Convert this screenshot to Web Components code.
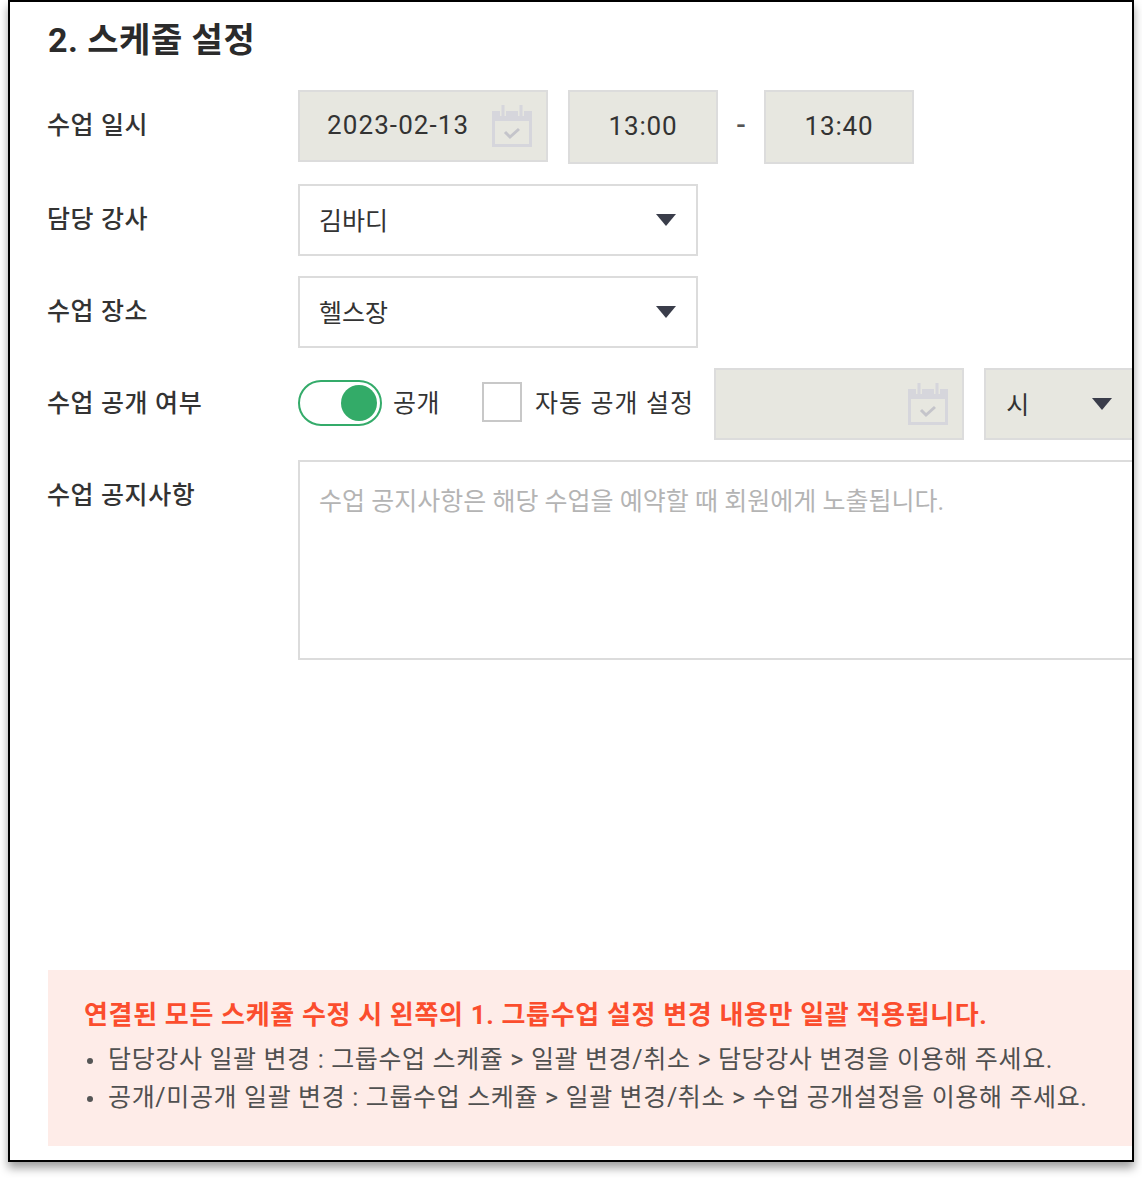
<!DOCTYPE html>
<html lang="ko">
<head>
<meta charset="utf-8">
<title>스케줄 설정</title>
<style>
  html, body { margin: 0; background: #fff; overflow: hidden; }
  body { height: 1178px; font-family: Roboto, "Noto Sans CJK KR", "Noto Sans", sans-serif; color: #333; }
</style>
</head>
<body>

<sk-panel>
  <sk-heading slot="heading">2. 스케줄 설정</sk-heading>

  <sk-row label="수업 일시">
    <sk-field width="250" height="72" disabled icon style="letter-spacing:1.1px">2023-02-13</sk-field>
    <sk-field width="150" height="74" disabled align="center">13:00</sk-field>
    <span style="width:46px;margin:0 -20px;text-align:center;font-size:28px;font-weight:500;line-height:70px;color:#555">-</span>
    <sk-field width="150" height="74" disabled align="center">13:40</sk-field>
  </sk-row>

  <sk-row label="담당 강사">
    <sk-select width="400">김바디</sk-select>
  </sk-row>

  <sk-row label="수업 장소">
    <sk-select width="400">헬스장</sk-select>
  </sk-row>

  <sk-row label="수업 공개 여부">
    <sk-toggle>공개</sk-toggle>
    <sk-check>자동 공개 설정</sk-check>
    <sk-field width="250" height="72" disabled icon></sk-field>
    <sk-select width="150" disabled>시</sk-select>
  </sk-row>

  <sk-row label="수업 공지사항">
    <sk-notearea placeholder="수업 공지사항은 해당 수업을 예약할 때 회원에게 노출됩니다."></sk-notearea>
  </sk-row>

  <sk-notice slot="footer" heading="연결된 모든 스케쥴 수정 시 왼쪽의 1. 그룹수업 설정 변경 내용만 일괄 적용됩니다.">
    <li>담당강사 일괄 변경 : 그룹수업 스케쥴 &gt; 일괄 변경/취소 &gt; 담당강사 변경을 이용해 주세요.</li>
    <li>공개/미공개 일괄 변경 : 그룹수업 스케쥴 &gt; 일괄 변경/취소 &gt; 수업 공개설정을 이용해 주세요.</li>
  </sk-notice>
</sk-panel>

<script>
/* shared calendar glyph, used by sk-field */
const CALENDAR_SVG = `
  <svg width="40" height="42" viewBox="0 0 40 42" aria-hidden="true">
    <path d="M0 6h40v36H0z" fill="#d6d6dc"/>
    <path d="M3 16h34v23H3z" fill="#e7e7e0"/>
    <path d="M8 1h6v10H8zM26 1h6v10h-6z" fill="#e7e7e0"/>
    <path d="M9.5 0h3v11h-3zM27.5 0h3v11h-3z" fill="#d6d6dc"/>
    <path d="M13 27l5 5 9-8" fill="none" stroke="#c4c4ca" stroke-width="3"/>
  </svg>`;

class SkPanel extends HTMLElement {
  constructor() {
    super();
    this.attachShadow({ mode: 'open' }).innerHTML = `
      <style>
        :host {
          display: block;
          box-sizing: border-box;
          width: 1126px;
          height: 1162px;
          margin-left: 8px;
          border: 2px solid #000;
          background: #fff;
          box-shadow: 0 6px 9px rgba(0, 0, 0, .38);
          overflow: hidden;
        }
        .inner {
          box-sizing: border-box;
          height: 100%;
          padding: 15px 0 14px 38px;
          display: flex;
          flex-direction: column;
        }
        .rows {
          display: flex;
          flex-direction: column;
          gap: 20px;
          margin-top: 27px;
        }
        .foot { margin-top: auto; }
      </style>
      <div class="inner">
        <slot name="heading"></slot>
        <div class="rows"><slot></slot></div>
        <div class="foot"><slot name="footer"></slot></div>
      </div>`;
  }
}

class SkHeading extends HTMLElement {
  constructor() {
    super();
    this.attachShadow({ mode: 'open' }).innerHTML = `
      <style>
        :host {
          display: block;
          font-size: 34px;
          font-weight: 700;
          line-height: 46px;
          letter-spacing: .5px;
          color: #2b2b2b;
        }
      </style>
      <slot></slot>`;
  }
}

class SkRow extends HTMLElement {
  constructor() {
    super();
    const root = this.attachShadow({ mode: 'open' });
    root.innerHTML = `
      <style>
        :host { display: flex; align-items: flex-start; }
        .label {
          flex: none;
          width: 251px;
          margin-left: -1px;
          font-size: 25px;
          font-weight: 500;
          color: #333;
          line-height: 72px;
          letter-spacing: .6px;
        }
        .ctl { flex: none; display: flex; align-items: flex-start; gap: 20px; }
      </style>
      <div class="label"></div>
      <div class="ctl"><slot></slot></div>`;
    root.querySelector('.label').textContent = this.getAttribute('label');
  }
}

class SkField extends HTMLElement {
  constructor() {
    super();
    const root = this.attachShadow({ mode: 'open' });
    const hasIcon = this.hasAttribute('icon');
    root.innerHTML = `
      <style>
        :host {
          display: flex;
          box-sizing: border-box;
          width: ${this.getAttribute('width') || 250}px;
          height: ${this.getAttribute('height') || 72}px;
          border: 2px solid #dcdcdc;
          align-items: center;
          padding: 0 14px 0 27px;
          font-size: 26px;
          letter-spacing: .9px;
          color: #333;
          flex: none;
        }
        :host([disabled]) { background: #e7e7e0; }
        :host([align="center"]) { justify-content: center; padding: 0; }
        .txt { flex: 1; position: relative; top: -1px; }
        :host([align="center"]) .txt { flex: none; }
        svg { display: block; flex: none; }
      </style>
      <span class="txt"><slot></slot></span>
      ${hasIcon ? CALENDAR_SVG : ''}`;
  }
}

class SkSelect extends HTMLElement {
  constructor() {
    super();
    this.attachShadow({ mode: 'open' }).innerHTML = `
      <style>
        :host {
          display: flex;
          box-sizing: border-box;
          width: ${this.getAttribute('width') || 400}px;
          height: 72px;
          border: 2px solid #dcdcdc;
          align-items: center;
          justify-content: space-between;
          padding: 0 20px 2px 19px;
          font-size: 25px;
          color: #333;
          background: #fff;
          flex: none;
        }
        :host([disabled]) { background: #e7e7e0; padding-left: 20px; }
        i {
          width: 0;
          height: 0;
          border: solid transparent;
          border-width: 12px 10px 0;
          border-top-color: #3a3d4a;
          position: relative;
          top: 1px;
        }
      </style>
      <span><slot></slot></span>
      <i></i>`;
  }
}

class SkToggle extends HTMLElement {
  constructor() {
    super();
    this.attachShadow({ mode: 'open' }).innerHTML = `
      <style>
        :host {
          display: flex;
          align-items: center;
          gap: 11px;
          height: 72px;
          font-size: 25px;
          letter-spacing: .5px;
          color: #333;
          flex: none;
          margin-top: -1px;
        }
        .track {
          box-sizing: border-box;
          width: 84px;
          height: 46px;
          border: 2px solid #34ab6a;
          border-radius: 23px;
          padding: 3px;
          display: flex;
          justify-content: flex-end;
          background: #fff;
        }
        .knob { width: 36px; height: 36px; border-radius: 50%; background: #33ab68; }
        span { position: relative; top: -2px; }
      </style>
      <div class="track"><div class="knob"></div></div>
      <span><slot></slot></span>`;
  }
}

class SkCheck extends HTMLElement {
  constructor() {
    super();
    this.attachShadow({ mode: 'open' }).innerHTML = `
      <style>
        :host {
          display: flex;
          align-items: center;
          gap: 13px;
          height: 72px;
          font-size: 25px;
          letter-spacing: 1.1px;
          color: #333;
          flex: none;
          margin: -2px 0 0 22px;
        }
        .box { box-sizing: border-box; width: 40px; height: 40px; border: 2px solid #c8c8c8; background: #fff; }
        span { position: relative; top: -1px; }
      </style>
      <div class="box"></div>
      <span><slot></slot></span>`;
  }
}

class SkNotearea extends HTMLElement {
  constructor() {
    super();
    const root = this.attachShadow({ mode: 'open' });
    root.innerHTML = `
      <style>
        :host {
          display: block;
          box-sizing: border-box;
          width: 900px;
          height: 200px;
          border: 2px solid #dcdcdc;
          padding: 22px 19px;
          font-size: 25px;
          line-height: 36px;
          color: #b4b4b4;
        }
      </style>
      <div class="ph"></div>`;
    root.querySelector('.ph').textContent = this.getAttribute('placeholder');
  }
}

class SkNotice extends HTMLElement {
  constructor() {
    super();
    const root = this.attachShadow({ mode: 'open' });
    root.innerHTML = `
      <style>
        :host {
          display: block;
          box-sizing: border-box;
          height: 176px;
          padding: 25px 36px 0;
          background: #feece8;
          color: #505050;
          font-size: 25px;
          letter-spacing: .64px;
        }
        .title {
          font-size: 26px;
          font-weight: 700;
          line-height: 40px;
          letter-spacing: .65px;
          color: #fb4d2d;
          margin-bottom: 6px;
        }
        ::slotted(li) {
          list-style: none;
          line-height: 38px;
          position: relative;
          padding-left: 24px;
        }
        ::slotted(li)::before {
          content: "";
          position: absolute;
          left: 3px;
          top: 17px;
          width: 6px;
          height: 6px;
          border-radius: 50%;
          background: #555;
        }
      </style>
      <div class="title"></div>
      <slot></slot>`;
    root.querySelector('.title').textContent = this.getAttribute('heading');
  }
}

customElements.define('sk-panel', SkPanel);
customElements.define('sk-heading', SkHeading);
customElements.define('sk-row', SkRow);
customElements.define('sk-field', SkField);
customElements.define('sk-select', SkSelect);
customElements.define('sk-toggle', SkToggle);
customElements.define('sk-check', SkCheck);
customElements.define('sk-notearea', SkNotearea);
customElements.define('sk-notice', SkNotice);
</script>
</body>
</html>
